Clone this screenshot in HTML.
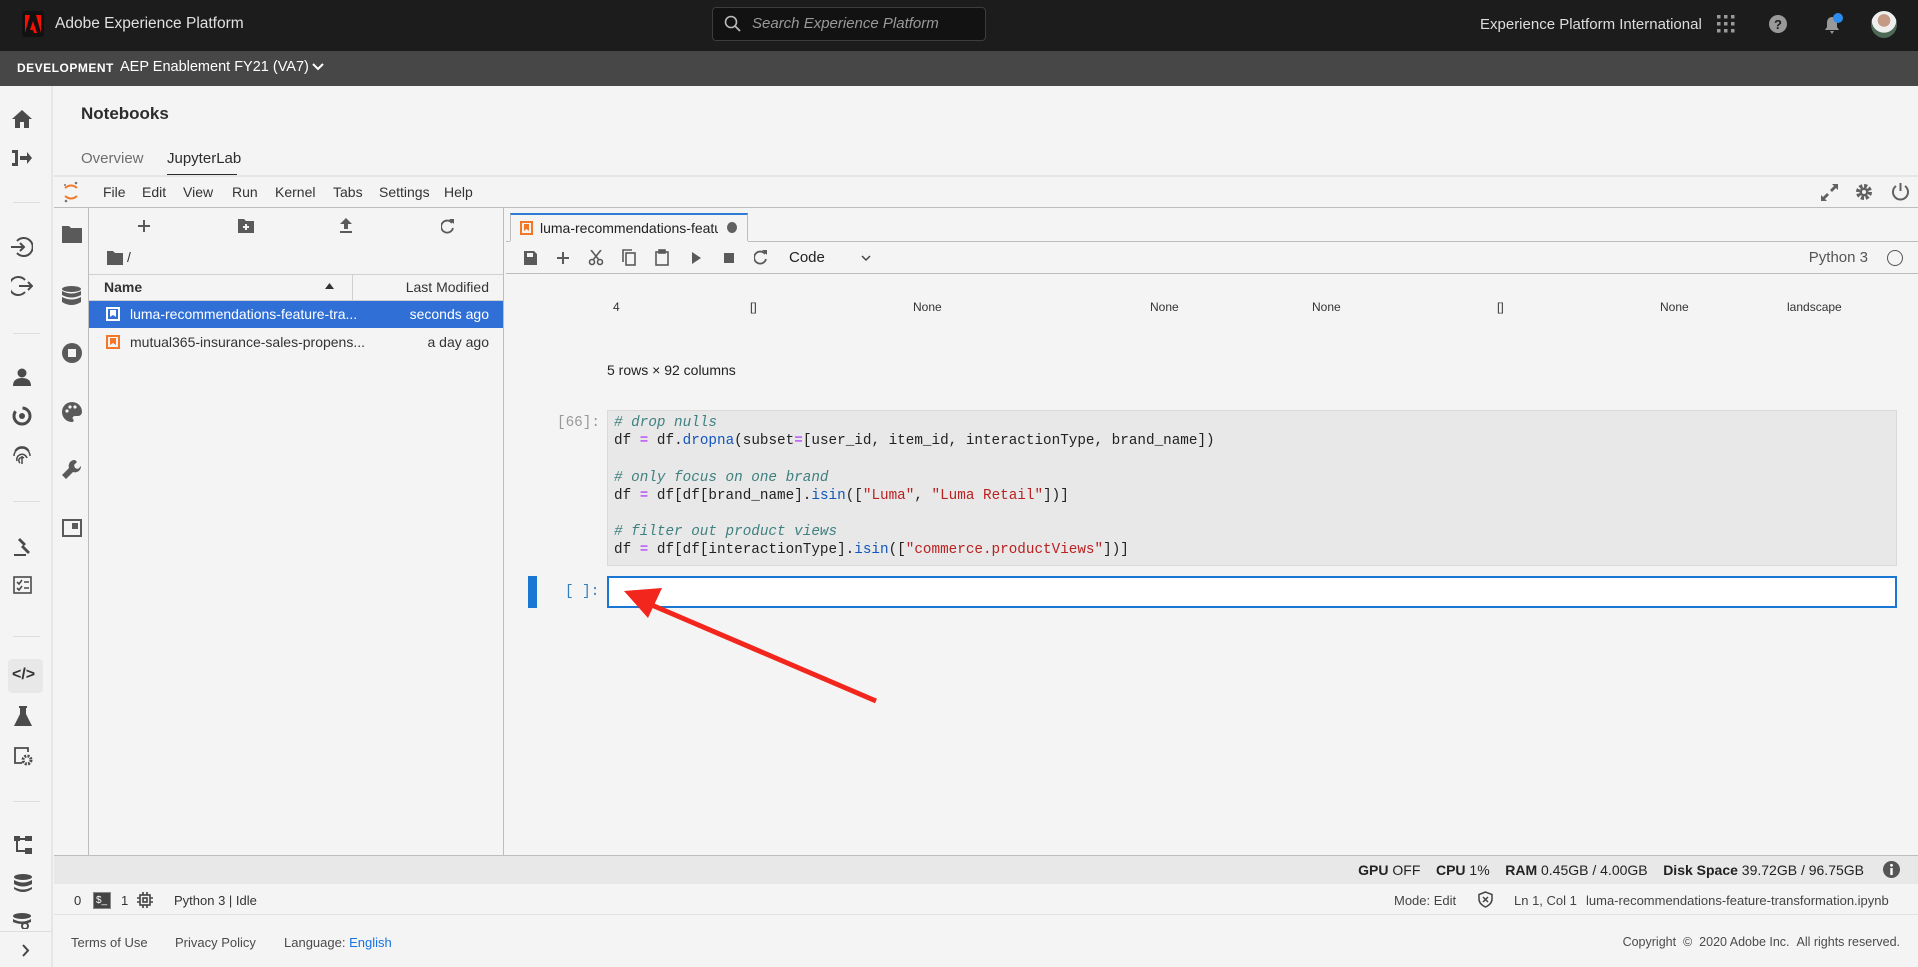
<!DOCTYPE html>
<html><head><meta charset="utf-8">
<style>
*{box-sizing:border-box;margin:0;padding:0}
body{width:1918px;height:967px;position:relative;overflow:hidden;background:#f4f4f4;font-family:"Liberation Sans",sans-serif;color:#333}
.a{position:absolute}
.t{position:absolute;white-space:nowrap}
.mono{font-family:"Liberation Mono",monospace;font-size:14.3px}
.ic{position:absolute;fill:#5a5a5a}
.rail{fill:#4b4b4b}
</style></head><body>
<!-- top bar -->
<div class="a" style="left:0;top:0;width:1918px;height:51px;background:#1c1c1c"></div>
<div class="a" style="left:22px;top:11px;width:22px;height:26px;background:#111;border-radius:3px"></div>
<svg class="a" style="left:25px;top:15px" width="16" height="18" viewBox="0 0 16 18"><path d="M5 0H0v18zM11 0h5v18zM8 6l4 12H9l-1-3H5z" fill="#fa0f00"/></svg>
<div class="t" style="left:55px;top:15px;color:#e0e0e0;font-size:15.5px">Adobe Experience Platform</div>
<div class="a" style="left:712px;top:7px;width:274px;height:34px;border:1px solid #3d3d3d;border-radius:4px;background:#121212"></div>
<svg class="a" style="left:724px;top:15px" width="18" height="18" viewBox="0 0 18 18"><circle cx="7" cy="7" r="5.5" stroke="#bbb" stroke-width="1.6" fill="none"/><path d="M11 11l5 5" stroke="#bbb" stroke-width="1.8"/></svg>
<div class="t" style="left:752px;top:15px;color:#999;font-size:15px;font-style:italic">Search Experience Platform</div>
<div class="t" style="left:1480px;top:16px;color:#ddd;font-size:15px">Experience Platform International</div>
<svg class="a" style="left:1717px;top:15px" width="18" height="18" viewBox="0 0 18 18" fill="#999"><rect x="0" y="0" width="3.5" height="3.5"/><rect x="7" y="0" width="3.5" height="3.5"/><rect x="14" y="0" width="3.5" height="3.5"/><rect x="0" y="7" width="3.5" height="3.5"/><rect x="7" y="7" width="3.5" height="3.5"/><rect x="14" y="7" width="3.5" height="3.5"/><rect x="0" y="14" width="3.5" height="3.5"/><rect x="7" y="14" width="3.5" height="3.5"/><rect x="14" y="14" width="3.5" height="3.5"/></svg>
<svg class="a" style="left:1769px;top:15px" width="18" height="18" viewBox="0 0 18 18"><circle cx="9" cy="9" r="9" fill="#999"/><text x="9" y="14" text-anchor="middle" font-family="Liberation Sans" font-weight="bold" font-size="13" fill="#1c1c1c">?</text></svg>
<svg class="a" style="left:1822px;top:13px" width="22" height="22" viewBox="0 0 22 22"><path d="M3 17h14l-2-3V9a5 5 0 0 0-10 0v5zM8 18h4l-2 3z" fill="#999"/><circle cx="16" cy="5" r="5" fill="#2d8cf0"/></svg>
<div class="a" style="left:1871px;top:11px;width:26px;height:27px;border-radius:50%;background:radial-gradient(circle at 50% 35%,#c49a85 0 28%,#eee 30% 55%,#4c6a55 57%)"></div>
<!-- second bar -->
<div class="a" style="left:0;top:51px;width:1918px;height:35px;background:#474747"></div>
<div class="t" style="left:17px;top:61px;color:#fff;font-size:12px;font-weight:bold;letter-spacing:.5px">DEVELOPMENT</div>
<div class="t" style="left:120px;top:59px;color:#fff;font-size:14.5px">AEP Enablement FY21 (VA7)</div>
<svg class="a" style="left:312px;top:63px" width="12" height="9" viewBox="0 0 12 9"><path d="M1 1l5 5 5-5" stroke="#fff" stroke-width="2" fill="none"/></svg>
<!-- left rail -->
<div class="a" style="left:0;top:86px;width:53px;height:881px;background:#f4f4f4;border-right:2px solid #e6e6e6"></div>
<svg class="a rail" style="left:12px;top:110px" width="20" height="18" viewBox="0 0 20 18"><path d="M10 0l10 9h-3v9h-5v-6H8v6H3V9H0z"/></svg>
<svg class="a rail" style="left:12px;top:150px" width="20" height="16" viewBox="0 0 20 16"><path d="M0 0h6v16H0v-3h3V3H0zM8 6h7V2l5 6-5 6v-4H8z"/></svg>
<div class="a" style="left:13px;top:202px;width:27px;height:1px;background:#ddd"></div>
<svg class="a" style="left:11px;top:237px" width="22" height="20" viewBox="0 0 22 20"><path d="M6 4a9 9 0 1 1 0 12" stroke="#4b4b4b" stroke-width="2" fill="none"/><path d="M0 10h13M9 6l4 4-4 4" stroke="#4b4b4b" stroke-width="2" fill="none"/></svg>
<svg class="a" style="left:11px;top:276px" width="22" height="20" viewBox="0 0 22 20"><path d="M14 4a9 9 0 1 0 0 12" stroke="#4b4b4b" stroke-width="2" fill="none"/><path d="M8 10h13M17 6l4 4-4 4" stroke="#4b4b4b" stroke-width="2" fill="none"/></svg>
<div class="a" style="left:13px;top:333px;width:27px;height:1px;background:#ddd"></div>
<svg class="a rail" style="left:13px;top:368px" width="18" height="18" viewBox="0 0 18 18"><circle cx="9" cy="5" r="4.5"/><path d="M0 18q0-8 9-8t9 8z"/></svg>
<svg class="a" style="left:12px;top:406px" width="20" height="20" viewBox="0 0 20 20"><circle cx="10" cy="10" r="8" stroke="#4b4b4b" stroke-width="3" fill="none" stroke-dasharray="30 8"/><circle cx="10" cy="10" r="3" fill="#4b4b4b"/></svg>
<svg class="a" style="left:12px;top:445px" width="20" height="20" viewBox="0 0 20 20" fill="none" stroke="#4b4b4b" stroke-width="1.5"><path d="M3 6a8 8 0 0 1 14 0M2 11a8 8 0 0 1 16 0M5 16a5 5 0 0 1 10-3M8 18a2 2 0 0 1 4-5M10 11v8"/></svg>
<div class="a" style="left:13px;top:501px;width:27px;height:1px;background:#ddd"></div>
<svg class="a rail" style="left:12px;top:537px" width="20" height="20" viewBox="0 0 20 20"><path d="M8 1l6 6-2 2-6-6zM2 19h12v-2H2zM9 10l2-2 7 7-2 2z"/></svg>
<svg class="a" style="left:13px;top:576px" width="19" height="18" viewBox="0 0 19 18" fill="none" stroke="#4b4b4b" stroke-width="1.6"><rect x="1" y="1" width="17" height="16"/><path d="M4 6l2 2 3-4M4 12l2 2 3-4M11 6h5M11 12h5"/></svg>
<div class="a" style="left:13px;top:636px;width:27px;height:1px;background:#ddd"></div>
<div class="a" style="left:8px;top:659px;width:35px;height:34px;border-radius:4px;background:#e8e8e8"></div>
<div class="t" style="left:12px;top:666px;font-size:16px;color:#333;font-weight:bold">&lt;/&gt;</div>
<svg class="a rail" style="left:14px;top:706px" width="18" height="20" viewBox="0 0 18 20"><path d="M5 0h8v2h-1v6l6 12H0L6 8V2H5z"/></svg>
<svg class="a" style="left:13px;top:746px" width="20" height="20" viewBox="0 0 20 20"><path d="M9 17H2V2h13v4" stroke="#4b4b4b" stroke-width="1.8" fill="none"/><circle cx="14" cy="14" r="4" stroke="#4b4b4b" stroke-width="3" fill="none" stroke-dasharray="2 1.2"/></svg>
<div class="a" style="left:13px;top:801px;width:27px;height:1px;background:#ddd"></div>
<svg class="a rail" style="left:14px;top:836px" width="18" height="18" viewBox="0 0 18 18"><rect x="0" y="0" width="6" height="5"/><rect x="11" y="0" width="7" height="5"/><rect x="11" y="12" width="7" height="6"/><path d="M2 5h2v9h7v2H2zM6 2h5v2H6z"/></svg>
<svg class="a rail" style="left:14px;top:874px" width="18" height="18" viewBox="0 0 18 18"><ellipse cx="9" cy="3" rx="9" ry="3"/><path d="M0 6q9 5 18 0v4q-9 5-18 0zM0 13q9 5 18 0v2q-9 6-18 0z"/></svg>
<svg class="a rail" style="left:13px;top:913px" width="20" height="16" viewBox="0 0 20 16"><ellipse cx="9" cy="3" rx="9" ry="3"/><path d="M0 6q9 5 18 0v3q-9 4-18 0z"/><circle cx="12" cy="13" r="3" fill="none" stroke="#4b4b4b" stroke-width="2"/></svg>
<div class="a" style="left:0;top:931px;width:52px;height:1px;background:#ddd"></div>
<svg class="a" style="left:22px;top:944px" width="9" height="13" viewBox="0 0 9 13"><path d="M1 1l5 5.5L1 12" stroke="#444" stroke-width="2" fill="none"/></svg>
<!-- Notebooks header -->
<div class="t" style="left:81px;top:104px;font-size:17px;color:#2c2c2c;font-weight:bold">Notebooks</div>
<div class="t" style="left:81px;top:150px;font-size:15px;color:#6e6e6e">Overview</div>
<div class="t" style="left:167px;top:150px;font-size:15px;color:#2c2c2c">JupyterLab</div>
<div class="a" style="left:167px;top:174px;width:70px;height:3px;background:#2c2c2c"></div>
<div class="a" style="left:54px;top:175px;width:1864px;height:2px;background:#e6e6e6"></div>
<!-- jupyter menu -->
<svg class="a" style="left:63px;top:181px" width="16" height="22" viewBox="0 0 16 22"><path d="M2 7q6-5 12 0" stroke="#f37726" stroke-width="2" fill="none"/><path d="M2 15q6 5 12 0" stroke="#f37726" stroke-width="2" fill="none"/><circle cx="13" cy="2" r="1.3" fill="#767677"/><circle cx="2" cy="4" r="1" fill="#767677"/><circle cx="3" cy="20" r="1.3" fill="#767677"/></svg>
<div class="t" style="left:103px;top:184px;font-size:14px;color:#333">File</div>
<div class="t" style="left:142px;top:184px;font-size:14px;color:#333">Edit</div>
<div class="t" style="left:183px;top:184px;font-size:14px;color:#333">View</div>
<div class="t" style="left:232px;top:184px;font-size:14px;color:#333">Run</div>
<div class="t" style="left:275px;top:184px;font-size:14px;color:#333">Kernel</div>
<div class="t" style="left:333px;top:184px;font-size:14px;color:#333">Tabs</div>
<div class="t" style="left:379px;top:184px;font-size:14px;color:#333">Settings</div>
<div class="t" style="left:444px;top:184px;font-size:14px;color:#333">Help</div>
<svg class="a" style="left:1820px;top:183px" width="19" height="19" viewBox="0 0 19 19" fill="#616161"><path d="M12 1h6v6l-2-2-4 4-2-2 4-4zM7 18H1v-6l2 2 4-4 2 2-4 4z"/></svg>
<svg class="a" style="left:1855px;top:183px" width="18" height="18" viewBox="0 0 18 18"><circle cx="9" cy="9" r="6" fill="none" stroke="#616161" stroke-width="4" stroke-dasharray="3 1.7"/><circle cx="9" cy="9" r="4.5" fill="#616161"/><circle cx="9" cy="9" r="2" fill="#f4f4f4"/></svg>
<svg class="a" style="left:1891px;top:182px" width="19" height="19" viewBox="0 0 19 19" fill="none" stroke="#616161" stroke-width="2"><path d="M5 4a7.5 7.5 0 1 0 9 0M9.5 1v8"/></svg>
<div class="a" style="left:54px;top:207px;width:1864px;height:1px;background:#bdbdbd"></div>
<!-- jupyter left sidebar -->
<div class="a" style="left:88px;top:208px;width:1px;height:648px;background:#bdbdbd"></div>
<svg class="ic" style="left:62px;top:226px" width="20" height="17" viewBox="0 0 20 17"><path d="M0 0h7l2 2h11v15H0z"/></svg>
<svg class="ic" style="left:62px;top:286px" width="19" height="20" viewBox="0 0 19 20"><ellipse cx="9.5" cy="3" rx="9.5" ry="3"/><path d="M0 5q9.5 5 19 0v4q-9.5 5-19 0zM0 11q9.5 5 19 0v5q-9.5 6-19 0z"/></svg>
<svg class="ic" style="left:62px;top:343px" width="20" height="20" viewBox="0 0 20 20"><circle cx="10" cy="10" r="10"/><rect x="6" y="6" width="8" height="8" fill="#f4f4f4"/></svg>
<svg class="ic" style="left:62px;top:402px" width="20" height="20" viewBox="0 0 20 20"><path d="M10 0a10 10 0 0 0 0 20c2 0 2-2 1-3s0-3 2-3h3a4 4 0 0 0 4-4A10 10 0 0 0 10 0z"/><circle cx="5" cy="9" r="1.6" fill="#f4f4f4"/><circle cx="8" cy="5" r="1.6" fill="#f4f4f4"/><circle cx="13" cy="5" r="1.6" fill="#f4f4f4"/></svg>
<svg class="ic" style="left:62px;top:460px" width="20" height="20" viewBox="0 0 20 20"><path d="M13 0a6 6 0 0 0-6 8L0 15l4 4 7-7a6 6 0 0 0 8-6l-3 3-3-1-1-3 3-3z"/></svg>
<svg class="ic" style="left:62px;top:519px" width="20" height="18" viewBox="0 0 20 18"><path d="M0 0h20v18H0zM2 2v14h16V2zM10 4h6v6h-6z"/></svg>
<!-- file browser -->
<div class="a" style="left:503px;top:208px;width:1px;height:648px;background:#bdbdbd"></div>
<svg class="ic" style="left:138px;top:220px" width="12" height="12" viewBox="0 0 12 12"><path d="M5 0h2v5h5v2H7v5H5V7H0V5h5z"/></svg>
<svg class="ic" style="left:238px;top:219px" width="16" height="14" viewBox="0 0 16 14"><path d="M0 0h6l2 2h8v12H0z"/><path d="M7 5h2v2h2v2H9v2H7V9H5V7h2z" fill="#f4f4f4"/></svg>
<svg class="ic" style="left:340px;top:218px" width="12" height="15" viewBox="0 0 12 15"><path d="M6 0l6 6H8v5H4V6H0zM0 13h12v2H0z"/></svg>
<svg class="a" style="left:441px;top:219px" width="14" height="15" viewBox="0 0 14 15"><path d="M11 4a6 6 0 1 0 1 5" stroke="#5a5a5a" stroke-width="1.8" fill="none"/><path d="M8 0h5v5z" fill="#5a5a5a"/></svg>
<svg class="ic" style="left:107px;top:251px" width="16" height="14" viewBox="0 0 16 14"><path d="M0 0h6l2 2h8v12H0z"/></svg>
<div class="t" style="left:127px;top:249px;font-size:14px;color:#333">/</div>
<div class="a" style="left:89px;top:274px;width:414px;height:1px;background:#d0d0d0"></div>
<div class="a" style="left:89px;top:300px;width:414px;height:1px;background:#d0d0d0"></div>
<div class="a" style="left:352px;top:275px;width:1px;height:25px;background:#d0d0d0"></div>
<div class="t" style="left:104px;top:279px;font-size:14px;color:#333;font-weight:bold">Name</div>
<svg class="a" style="left:325px;top:283px" width="9" height="6" viewBox="0 0 9 6"><path d="M0 6l4.5-6L9 6z" fill="#333"/></svg>
<div class="t" style="right:1429px;top:279px;font-size:14px;color:#333">Last Modified</div>
<div class="a" style="left:89px;top:301px;width:414px;height:27px;background:#2f6fd6"></div>
<svg class="a" style="left:106px;top:307px" width="14" height="14" viewBox="0 0 14 14"><rect x="1" y="1" width="12" height="12" fill="none" stroke="#fff" stroke-width="2"/><path d="M4 3h6v7l-3-2-3 2z" fill="#fff"/></svg>
<div class="t" style="left:130px;top:306px;font-size:14px;color:#fff">luma-recommendations-feature-tra...</div>
<div class="t" style="right:1429px;top:306px;font-size:14px;color:#fff">seconds ago</div>
<svg class="a" style="left:106px;top:335px" width="14" height="14" viewBox="0 0 14 14"><rect x="1" y="1" width="12" height="12" fill="none" stroke="#f37726" stroke-width="2"/><path d="M4 3h6v7l-3-2-3 2z" fill="#f37726"/></svg>
<div class="t" style="left:130px;top:334px;font-size:14px;color:#333">mutual365-insurance-sales-propens...</div>
<div class="t" style="right:1429px;top:334px;font-size:14px;color:#333">a day ago</div>
<!-- notebook panel -->
<div class="a" style="left:510px;top:213px;width:238px;height:29px;background:#f4f4f4;border:1px solid #bdbdbd;border-bottom:none;border-top:2px solid #2f7bd6"></div>
<div class="a" style="left:506px;top:241px;width:1412px;height:1px;background:#bdbdbd"></div>
<div class="a" style="left:510px;top:241px;width:238px;height:1px;background:#f4f4f4"></div>
<svg class="a" style="left:520px;top:221px" width="13" height="14" viewBox="0 0 13 14"><rect x="1" y="1" width="11" height="12" fill="none" stroke="#f37726" stroke-width="2"/><path d="M4 3h5v7l-2.5-2L4 10z" fill="#f37726"/></svg>
<div class="t" style="left:540px;top:220px;font-size:14px;color:#222;width:178px;overflow:hidden">luma-recommendations-featur</div>
<div class="a" style="left:727px;top:222px;width:10px;height:11px;border-radius:50%;background:#616161"></div>
<svg class="ic" style="left:524px;top:251px" width="13" height="14" viewBox="0 0 13 14"><path d="M0 0h10l3 3v11H0zM3 2v4h6V2zM4 9h5v4H4z"/></svg>
<svg class="ic" style="left:557px;top:252px" width="12" height="12" viewBox="0 0 12 12"><path d="M5 0h2v5h5v2H7v5H5V7H0V5h5z"/></svg>
<svg class="a" style="left:588px;top:250px" width="16" height="16" viewBox="0 0 16 16" fill="none" stroke="#5a5a5a" stroke-width="1.6"><circle cx="4" cy="12" r="2.5"/><circle cx="12" cy="12" r="2.5"/><path d="M5 10L13 0M11 10L3 0"/></svg>
<svg class="a" style="left:622px;top:249px" width="14" height="17" viewBox="0 0 14 17" fill="none" stroke="#5a5a5a" stroke-width="1.6"><rect x="4" y="4" width="9" height="12"/><path d="M1 13V1h9"/></svg>
<svg class="a" style="left:655px;top:249px" width="14" height="17" viewBox="0 0 14 17" fill="none" stroke="#5a5a5a" stroke-width="1.6"><rect x="1" y="3" width="12" height="13"/><rect x="4" y="1" width="6" height="3" fill="#5a5a5a"/></svg>
<svg class="ic" style="left:692px;top:252px" width="9" height="12" viewBox="0 0 9 12"><path d="M0 0l9 6-9 6z"/></svg>
<svg class="ic" style="left:724px;top:253px" width="10" height="10" viewBox="0 0 10 10"><rect width="10" height="10"/></svg>
<svg class="a" style="left:754px;top:250px" width="14" height="15" viewBox="0 0 14 15"><path d="M11 4a6 6 0 1 0 1 5" stroke="#5a5a5a" stroke-width="1.8" fill="none"/><path d="M8 0h5v5z" fill="#5a5a5a"/></svg>
<div class="t" style="left:789px;top:249px;font-size:15px;color:#222">Code</div>
<svg class="a" style="left:861px;top:255px" width="10" height="7" viewBox="0 0 10 7"><path d="M1 1l4 4 4-4" stroke="#444" stroke-width="1.5" fill="none"/></svg>
<div class="t" style="right:50px;top:249px;font-size:15px;color:#555">Python 3</div>
<div class="a" style="left:1887px;top:250px;width:16px;height:16px;border-radius:50%;border:1.6px solid #555"></div>
<div class="a" style="left:506px;top:273px;width:1412px;height:1px;background:#bdbdbd"></div>
<!-- output -->
<div class="t" style="left:613px;top:300px;font-size:12px;color:#333">4</div>
<div class="t" style="left:750px;top:300px;font-size:12px;color:#333">[]</div>
<div class="t" style="left:913px;top:300px;font-size:12px;color:#333">None</div>
<div class="t" style="left:1150px;top:300px;font-size:12px;color:#333">None</div>
<div class="t" style="left:1312px;top:300px;font-size:12px;color:#333">None</div>
<div class="t" style="left:1497px;top:300px;font-size:12px;color:#333">[]</div>
<div class="t" style="left:1660px;top:300px;font-size:12px;color:#333">None</div>
<div class="t" style="left:1787px;top:300px;font-size:12px;color:#333">landscape</div>
<div class="t" style="left:607px;top:362px;font-size:14px;color:#222">5 rows × 92 columns</div>
<!-- code cell -->
<div class="t mono" style="left:557px;top:415px;color:#999">[66]:</div>
<div class="a" style="left:607px;top:410px;width:1290px;height:156px;background:#e8e8e8;border:1px solid #dadada"></div>
<div class="mono" style="position:absolute;left:614px;top:414px;line-height:18.2px;color:#222;white-space:pre"><span style="color:#408080;font-style:italic"># drop nulls</span>
df <span style="color:#a2f">=</span> df.<span style="color:#1356bb">dropna</span>(subset<span style="color:#a2f">=</span>[user_id, item_id, interactionType, brand_name])

<span style="color:#408080;font-style:italic"># only focus on one brand</span>
df <span style="color:#a2f">=</span> df[df[brand_name].<span style="color:#1356bb">isin</span>([<span style="color:#ba2121">"Luma"</span>, <span style="color:#ba2121">"Luma Retail"</span>])]

<span style="color:#408080;font-style:italic"># filter out product views</span>
df <span style="color:#a2f">=</span> df[df[interactionType].<span style="color:#1356bb">isin</span>([<span style="color:#ba2121">"commerce.productViews"</span>])]</div>
<div class="a" style="left:528px;top:576px;width:9px;height:32px;background:#1976d2"></div>
<div class="t mono" style="left:565px;top:584px;color:#307fc1">[ ]:</div>
<div class="a" style="left:607px;top:576px;width:1290px;height:32px;background:#fff;border:2px solid #1976d2"></div>
<!-- arrow -->
<svg class="a" style="left:600px;top:570px" width="300" height="150" viewBox="0 0 300 150"><path d="M276 131L40 30" stroke="#f2261c" stroke-width="5"/><path d="M24 21L62 18L48 48z" fill="#f2261c"/></svg>
<!-- status bars -->
<div class="a" style="left:54px;top:855px;width:1864px;height:29px;background:#e8e8e8;border-top:1px solid #bdbdbd"></div>
<div class="t" style="right:54px;top:862px;font-size:14px;color:#222"><b>GPU</b> OFF &nbsp;&nbsp; <b>CPU</b> 1% &nbsp;&nbsp; <b>RAM</b> 0.45GB / 4.00GB &nbsp;&nbsp; <b>Disk Space</b> 39.72GB / 96.75GB</div>
<svg class="a" style="left:1883px;top:861px" width="17" height="17" viewBox="0 0 17 17"><circle cx="8.5" cy="8.5" r="8.5" fill="#555"/><rect x="7.3" y="7" width="2.4" height="7" fill="#fff"/><circle cx="8.5" cy="4.3" r="1.4" fill="#fff"/></svg>
<div class="a" style="left:54px;top:914px;width:1864px;height:1px;background:#e2e2e2"></div>
<div class="t" style="left:74px;top:893px;font-size:13px;color:#333">0</div>
<div class="a" style="left:93px;top:892px;width:18px;height:17px;background:#444;border:1px solid #888;color:#fff;font-size:10px;line-height:15px;padding-left:2px">$_</div>
<div class="t" style="left:121px;top:893px;font-size:13px;color:#333">1</div>
<svg class="a" style="left:137px;top:892px" width="16" height="16" viewBox="0 0 16 16" fill="none" stroke="#444" stroke-width="1.6"><rect x="3" y="3" width="10" height="10"/><rect x="6" y="6" width="4" height="4"/><path d="M6 0v3M10 0v3M6 13v3M10 13v3M0 6h3M0 10h3M13 6h3M13 10h3"/></svg>
<div class="t" style="left:174px;top:893px;font-size:13px;color:#333">Python 3 | Idle</div>
<div class="t" style="left:1394px;top:893px;font-size:13px;color:#444">Mode: Edit</div>
<svg class="a" style="left:1478px;top:891px" width="15" height="17" viewBox="0 0 15 17" fill="none" stroke="#444" stroke-width="1.5"><path d="M7.5 1L1 3.5V8q0 5 6.5 8 6.5-3 6.5-8V3.5z"/><path d="M5 6l5 5M10 6l-5 5"/></svg>
<div class="t" style="left:1514px;top:893px;font-size:13px;color:#444">Ln 1, Col 1</div>
<div class="t" style="left:1586px;top:893px;font-size:13px;color:#444">luma-recommendations-feature-transformation.ipynb</div>
<!-- footer -->
<div class="t" style="left:71px;top:935px;font-size:13px;color:#4b4b4b">Terms of Use</div>
<div class="t" style="left:175px;top:935px;font-size:13px;color:#4b4b4b">Privacy Policy</div>
<div class="t" style="left:284px;top:935px;font-size:13px;color:#4b4b4b">Language: <span style="color:#1473e6">English</span></div>
<div class="t" style="right:18px;top:935px;font-size:12.5px;color:#4b4b4b">Copyright &nbsp;©&nbsp; 2020 Adobe Inc. &nbsp;All rights reserved.</div>
</body></html>
